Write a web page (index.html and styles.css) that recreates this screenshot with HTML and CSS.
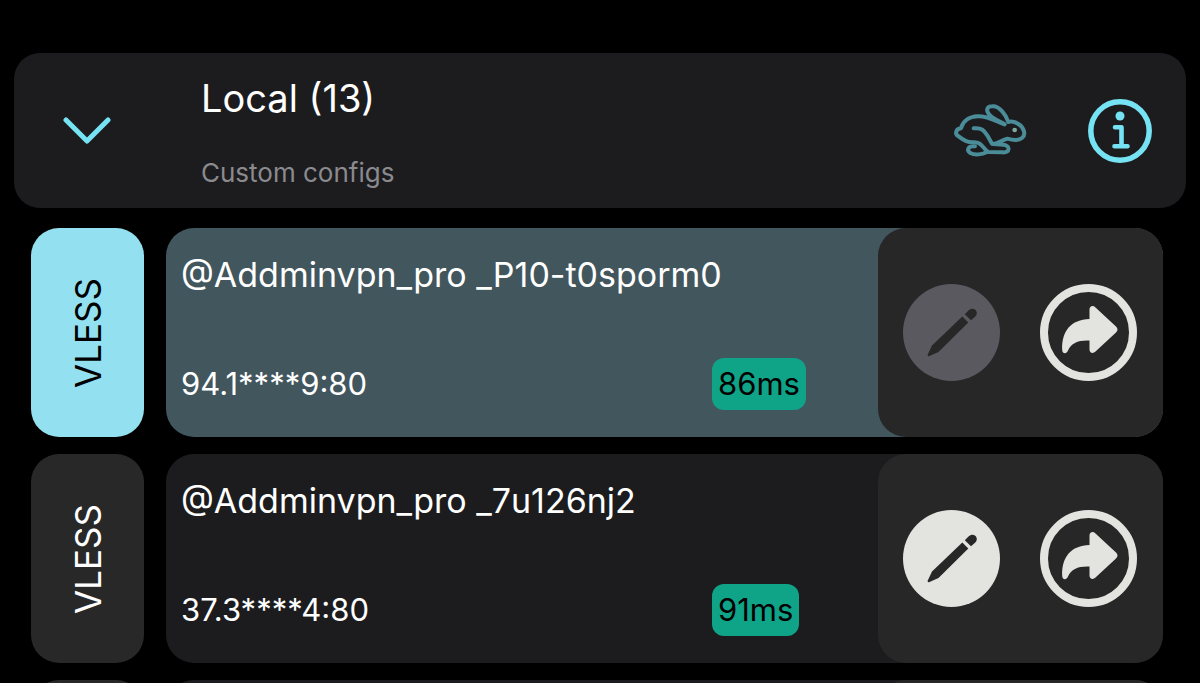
FILE: index.html
```html
<!DOCTYPE html>
<html lang="en">
<head>
<meta charset="utf-8">
<meta name="viewport" content="width=device-width, initial-scale=1">
<title>Local configs</title>
<link rel="stylesheet" href="styles.css">
</head>
<body>
<svg class="sprite" aria-hidden="true">
  <symbol id="icon-pencil" viewBox="0 0 97 97">
    <circle cx="48.500" cy="48.500" r="48.500" fill="currentColor"/>
    <g class="ink">
      <path d="M59.300 32.500 65.300 38.500 35.500 68 26.500 72Q24 72.800 24.800 70.500L29 61.500Z"/>
      <path d="M61.800 30.200 65.500 26.500C70.500 21.500 77 28 72 32.800L68 36.300Z"/>
    </g>
  </symbol>
  <symbol id="icon-share" viewBox="0 0 97 97">
    <circle cx="48.500" cy="48.500" r="44.500" fill="none" stroke="currentColor" stroke-width="8"/>
    <path fill="currentColor" d="M49.500 35V25.500C49.500 22 53 21 55.500 23.500L76 42.500Q79 45.500 76 48.500L55.500 67.500C53 70 49.500 69 49.500 65.500V56.500C38 56 31.500 59 28 66.500C26.300 70.500 22.500 70 22.200 66C21.500 47 31 35.500 49.500 35Z"/>
  </symbol>
</svg>
<main class="screen">
  <header class="group">
    <button class="icon-button toggle" type="button" aria-label="Collapse group">
      <svg class="chevron" viewBox="0 0 48 28" fill="none" stroke="currentColor" stroke-width="5" stroke-linecap="round" stroke-linejoin="round"><path d="M3 3 24 24 45 3"/></svg>
    </button>
    <div class="group-text">
      <h1 class="title">Local (13)</h1>
      <p class="subtitle">Custom configs</p>
    </div>
    <div class="group-tools">
      <button class="icon-button rabbit" type="button" aria-label="Speed test">
        <svg class="rabbit-icon" viewBox="42 40 219 165" fill="none" stroke="currentColor" stroke-width="12" stroke-linecap="round" stroke-linejoin="round">
          <path d="M194 104C167 94 143 79 113 80C86 81 68 96 63 116C46 118 44 134 56 140C66 148 79 158 97 158C126 154 128 178 145 187L188 188C211 190 211 168 191 165L160 163C176 161 187 150 202 147C220 152 237 152 246 145C259 135 252 112 234 102C224 96 213 94 205 97C199 77 178 48 157 50C138 50 137 65 151 78C163 90 179 95 194 104"/>
          <path d="M101 116C127 113 133 124 143 139L156 162"/>
          <path d="M105 170C83 168 79 182 91 190C105 198 127 194 141 187"/>
          <circle class="rabbit-eye" cx="224" cy="121" r="7"/>
        </svg>
      </button>
      <button class="icon-button info" type="button" aria-label="Information">
        <svg class="info-icon" viewBox="0 0 64 64" fill="none" stroke="currentColor" stroke-linecap="round" stroke-linejoin="round">
          <circle cx="32" cy="32" r="29.200" stroke-width="5.500"/>
          <circle cx="32" cy="17" r="4.500" fill="currentColor" stroke="none"/>
          <path stroke-width="4.600" d="M27 28.300H33.500V47.300M26.500 47.300H39.500"/>
        </svg>
      </button>
    </div>
  </header>

  <ul class="list">
    <li class="row active">
      <div class="protocol"><span class="protocol-name">VLESS</span></div>
      <div class="card">
        <div class="details">
          <h2 class="name">@Addminvpn_pro _P10-t0sporm0</h2>
          <div class="meta">
            <span class="address">94.1****9:80</span>
            <div class="ping-cell"><span class="ping">86ms</span></div>
          </div>
        </div>
        <div class="actions">
          <button class="icon-button edit" type="button" aria-label="Edit config" disabled><svg class="action-icon"><use href="#icon-pencil"/></svg></button>
          <button class="icon-button" type="button" aria-label="Share config"><svg class="action-icon"><use href="#icon-share"/></svg></button>
        </div>
      </div>
    </li>
    <li class="row">
      <div class="protocol"><span class="protocol-name">VLESS</span></div>
      <div class="card">
        <div class="details">
          <h2 class="name">@Addminvpn_pro _7u126nj2</h2>
          <div class="meta">
            <span class="address">37.3****4:80</span>
            <div class="ping-cell"><span class="ping">91ms</span></div>
          </div>
        </div>
        <div class="actions">
          <button class="icon-button edit" type="button" aria-label="Edit config"><svg class="action-icon"><use href="#icon-pencil"/></svg></button>
          <button class="icon-button" type="button" aria-label="Share config"><svg class="action-icon"><use href="#icon-share"/></svg></button>
        </div>
      </div>
    </li>
    <li class="row">
      <div class="protocol"></div>
      <div class="card">
        <div class="details"></div>
        <div class="actions"></div>
      </div>
    </li>
  </ul>
</main>
</body>
</html>
```

FILE: styles.css
```css
* {
  box-sizing: border-box;
  margin: 0;
  padding: 0;
}

body {
  background: #000;
  color: #fff;
  font-family: Inter, "Liberation Sans", sans-serif;
  font-weight: 400;
}

.sprite {
  display: none;
}

.screen {
  height: 100vh;
  overflow: hidden;
  padding: 53px 14px 0;
}

.icon-button {
  display: grid;
  place-items: center;
  border: 0;
  background: none;
  color: inherit;
}

.group {
  display: flex;
  align-items: center;
  padding: 20px 34px 20px 0;
  border-radius: 26px;
  background: #1c1c1e;
  color: #76e3f4;
}

.toggle {
  width: 146px;
}

.chevron {
  width: 48px;
  height: 28px;
}

.group-text {
  flex: 1;
  display: grid;
  gap: 35px;
  padding-left: 41px;
}

.title {
  color: #fff;
  font-size: 38px;
  font-weight: 400;
  line-height: 50px;
}

.subtitle {
  color: #8a8a8f;
  font-size: 26px;
  line-height: 30px;
}

.group-tools {
  display: flex;
  align-items: center;
  gap: 61px;
}

.rabbit {
  color: #4a8c98;
}

.rabbit-icon {
  width: 73px;
  height: 55px;
}

.rabbit-eye {
  fill: #7fa89c;
  stroke: none;
}

.info-icon {
  width: 64px;
  height: 64px;
}

.list {
  display: grid;
  gap: 17px;
  padding: 20px 23px 0 17px;
  list-style: none;
}

.row {
  display: grid;
  grid-template-columns: 113px 1fr;
  gap: 22px;
  min-height: 209px;
}

.protocol {
  display: grid;
  place-items: center;
  border-radius: 28px;
  background: #282828;
}

.protocol-name {
  font-size: 35px;
  line-height: 44px;
  writing-mode: vertical-rl;
  transform: rotate(180deg);
}

.card {
  display: grid;
  grid-template-columns: 1fr auto;
  border-radius: 28px;
  background: #1c1c1e;
}

.active .protocol {
  background: #93e1f0;
  color: #000;
}

.active .card {
  background: #42565d;
}

.details {
  display: flex;
  flex-direction: column;
  justify-content: space-between;
  padding: 27px 0 27px 15px;
}

.name {
  font-size: 34px;
  font-weight: 400;
  line-height: 40px;
}

.meta {
  display: flex;
  align-items: center;
  font-size: 31px;
  line-height: 40px;
}

.address {
  flex: 1;
}

.ping-cell {
  display: flex;
  width: 166px;
}

.ping {
  padding: 6px;
  border-radius: 12px;
  background: #0fa387;
  color: #000;
}

.actions {
  display: flex;
  align-items: center;
  gap: 40px;
  min-width: 285px;
  padding: 0 26px 0 25px;
  border-radius: 28px;
  background: #272727;
  color: #e3e3e0;
}

.action-icon {
  width: 97px;
  height: 97px;
  fill: #272727;
}

.edit:disabled {
  color: #5a595f;
}
```
